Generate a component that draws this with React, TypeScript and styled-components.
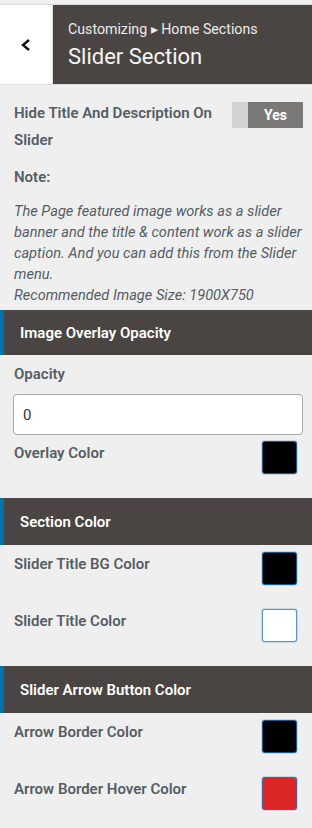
import React from 'react';
import styled, { createGlobalStyle } from 'styled-components';

const GlobalStyle = createGlobalStyle`
  html, body {
    margin: 0;
    padding: 0;
    background: #efefef;
  }
  body {
    font-family: Roboto, "Noto Sans", "Liberation Sans", sans-serif;
    color: #555d66;
  }
  * { box-sizing: border-box; }
`;

const Page = styled.div`
  width: 312px;
  min-height: 828px;
  padding-top: 4px;
  background: #efefef;
`;

const Header = styled.header`
  display: flex;
  height: 81px;
  border-top: 1px solid #dcdcdc;
  border-bottom: 1px solid #dcdcdc;
`;

const BackButton = styled.button`
  width: 53px;
  flex: none;
  display: flex;
  align-items: center;
  justify-content: center;
  background: #fff;
  border: none;
  border-right: 1px solid #dcdcdc;
  padding: 0;
  cursor: pointer;
`;

const HeaderTitle = styled.div`
  flex: 1;
  background: #4a4543;
  padding: 14px 0 0 15px;
`;

const Crumb = styled.div`
  font-size: 14.2px;
  line-height: 20px;
  color: #ececec;
`;

const Title = styled.h1`
  margin: 5px 0 0;
  font-size: 22px;
  font-weight: 400;
  line-height: 26px;
  color: #f6f6f6;
`;

const Block = styled.div`
  padding: 0 9px 0 14px;
`;

const ToggleRow = styled.div`
  display: flex;
  align-items: flex-start;
  justify-content: space-between;
  padding-top: 15px;
`;

const Label = styled.div<{ $lh?: number }>`
  font-size: 15px;
  font-weight: 600;
  line-height: ${p => p.$lh ?? 20}px;
  color: #555d66;
`;

const ToggleLabel = styled(Label)`
  max-width: 212px;
`;

const Toggle = styled.div`
  display: flex;
  width: 71px;
  height: 26px;
  margin-top: 2px;
  flex: none;
`;

const ToggleKnob = styled.span`
  width: 16px;
  background: #d4d4d4;
`;

const ToggleValue = styled.span`
  flex: 1;
  display: flex;
  align-items: center;
  justify-content: center;
  background: #7b7978;
  color: #fff;
  font-size: 14px;
  font-weight: 700;
`;

const NoteTitle = styled(Label)`
  margin-top: 13px;
  line-height: 21px;
`;

const NoteText = styled.p`
  margin: 13px -5px 4px 0;
  font-size: 14.6px;
  font-style: italic;
  line-height: 21px;
  color: #555d66;
`;

const SectionHead = styled.h3<{ $h: number }>`
  margin: 0;
  height: ${p => p.$h}px;
  display: flex;
  align-items: center;
  padding-left: 16px;
  background: #4a4543;
  border-left: 4px solid #0073aa;
  color: #fff;
  font-size: 15px;
  font-weight: 600;
`;

const FieldLabel = styled(Label)`
  margin-top: 9px;
`;

const TextInput = styled.input`
  display: block;
  width: 290px;
  height: 41px;
  margin: 10px 0 0 -1px;
  padding: 0 9px;
  border: 1px solid #a9a9a9;
  border-radius: 4px;
  background: #fff;
  font-family: inherit;
  font-size: 15px;
  color: #32373c;
  outline: none;
`;

const ColorRow = styled.div<{ $top: number }>`
  display: flex;
  align-items: flex-start;
  justify-content: space-between;
  padding-right: 6px;
  margin-top: ${p => p.$top}px;
  margin-bottom: 24px;
`;

const Swatch = styled.span<{ $color: string }>`
  width: 35px;
  height: 33px;
  border-radius: 3px;
  background: ${p => p.$color};
  border: 1px solid rgba(34, 113, 177, 0.75);
  box-shadow: 0 0 0 1px rgba(120, 170, 215, 0.35);
`;

const Chevron = () => (
  <svg width="12" height="14" viewBox="0 0 12 14">
    <polyline points="9,2 3,7 9,12" fill="none" stroke="#111" strokeWidth="2.4" />
  </svg>
);

type ColorField = { label: string; color: string };

const ColorItem = ({ label, color, top }: ColorField & { top: number }) => (
  <ColorRow $top={top}>
    <Label $lh={24}>{label}</Label>
    <Swatch $color={color} />
  </ColorRow>
);

const sectionColors: ColorField[] = [
  { label: 'Slider Title BG Color', color: '#000' },
  { label: 'Slider Title Color', color: '#fff' },
];

const arrowColors: ColorField[] = [
  { label: 'Arrow Border Color', color: '#000' },
  { label: 'Arrow Border Hover Color', color: '#dd2727' },
];

export default function App() {
  return (
    <Page>
      <GlobalStyle />
      <Header>
        <BackButton aria-label="Back">
          <Chevron />
        </BackButton>
        <HeaderTitle>
          <Crumb>Customizing ▸ Home Sections</Crumb>
          <Title>Slider Section</Title>
        </HeaderTitle>
      </Header>

      <Block>
        <ToggleRow>
          <ToggleLabel $lh={27}>Hide Title And Description On Slider</ToggleLabel>
          <Toggle>
            <ToggleKnob />
            <ToggleValue>Yes</ToggleValue>
          </Toggle>
        </ToggleRow>
        <NoteTitle>Note:</NoteTitle>
        <NoteText>
          The Page featured image works as a slider banner and the title &amp; content work as a slider
          caption. And you can add this from the Slider menu.
          <br />
          Recommended Image Size: 1900X750
        </NoteText>
      </Block>

      <SectionHead $h={45}>Image Overlay Opacity</SectionHead>
      <Block>
        <FieldLabel>Opacity</FieldLabel>
        <TextInput defaultValue="0" />
        <ColorItem label="Overlay Color" color="#000" top={6} />
      </Block>

      <SectionHead $h={47}>Section Color</SectionHead>
      <Block>
        {sectionColors.map((c, i) => (
          <ColorItem key={c.label} {...c} top={i === 0 ? 7 : 0} />
        ))}
      </Block>

      <SectionHead $h={47}>Slider Arrow Button Color</SectionHead>
      <Block>
        {arrowColors.map((c, i) => (
          <ColorItem key={c.label} {...c} top={i === 0 ? 7 : 0} />
        ))}
      </Block>
    </Page>
  );
}
